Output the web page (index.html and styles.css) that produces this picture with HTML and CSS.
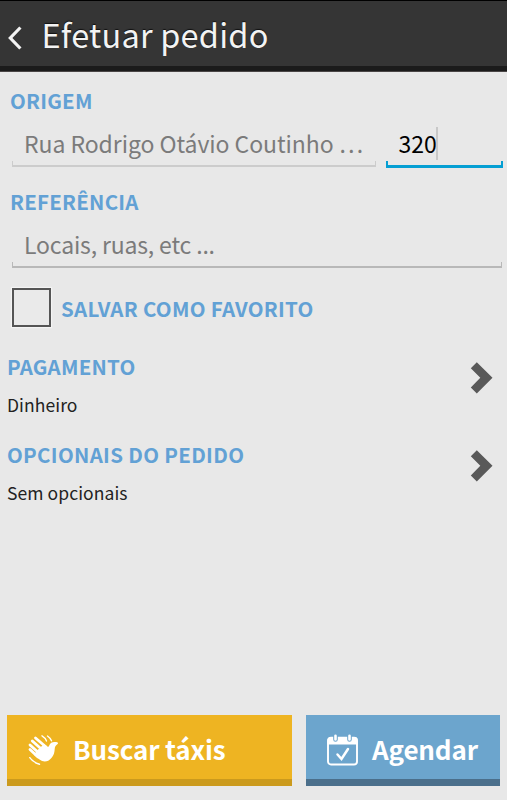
FILE: index.html
```html
<!DOCTYPE html>
<html lang="pt-BR">
<head>
<meta charset="utf-8">
<title>Efetuar pedido</title>
<link rel="stylesheet" href="styles.css">
</head>
<body>
<header class="bar">
  <svg class="back" width="14" height="24" viewBox="0 0 14 24"><path d="M12.4 1.5 2.3 12l10.1 10.500" /></svg>
  <h1 class="title">Efetuar pedido</h1>
</header>
<main class="form">
  <h2 class="label origin"><span>ORIGEM</span></h2>
  <div class="fields">
    <div class="field street"><span>Rua Rodrigo Otávio Coutinho …</span></div>
    <div class="field number"><span>320</span><i class="caret"></i></div>
  </div>
  <h2 class="label reference"><span>REFERÊNCIA</span></h2>
  <div class="field places"><span>Locais, ruas, etc ...</span></div>
  <div class="favorite"><i class="box"></i><span class="label save">SALVAR COMO FAVORITO</span></div>
  <section class="row">
    <div><h2 class="label pay"><span>PAGAMENTO</span></h2><p class="value cash">Dinheiro</p></div>
    <svg width="24" height="32" viewBox="0 0 24 32"><path d="M0.800 6.300 6.800 0.300 22.500 15.700 6.800 31.400 0.800 25.400 10.300 15.700Z"/></svg>
  </section>
  <section class="row">
    <div><h2 class="label options"><span>OPCIONAIS DO PEDIDO</span></h2><p class="value none">Sem opcionais</p></div>
    <svg width="24" height="32" viewBox="0 0 24 32"><path d="M0.800 6.300 6.800 0.300 22.500 15.700 6.800 31.400 0.800 25.400 10.300 15.700Z"/></svg>
  </section>
</main>
<footer class="actions">
  <div class="btn search">
    <svg width="32" height="32" viewBox="0 0 32 32">
      <g fill="none" stroke="#fff" stroke-linecap="round">
        <path stroke-width="2.800" d="M8.500 4 19 13M5.300 7 16 16.500M3 11 13 20M3 15.500 11 23"/>
        <path stroke-width="1.400" d="M15 1.800Q18 3.500 19.500 7M20.500 2Q23.200 3.700 24.500 6.800M2.800 23.700Q6 28.500 12.500 30.200"/>
      </g>
      <path fill="#fff" d="M9.500 17 17 10l4 3c1.500-.8 1.200-2.500 3-3.900 1.700-1.300 6.500-1.500 7-.1.400 1.200-2.600 1.900-3.100 4.600-.5 3 .1 6.500-3.500 10.300C21 28 16.500 28.500 12.500 25.500L7 21z"/>
    </svg>
    <span>Buscar táxis</span>
  </div>
  <div class="btn schedule">
    <svg width="32" height="32" viewBox="0 0 32 32">
      <rect x="2" y="3.700" width="29" height="26.800" rx="3" fill="none" stroke="#fff" stroke-width="1.900"/>
      <path fill="#fff" d="M1.500 9V5.500Q1.500 3 4.500 3h24q3 0 3 2.500V10.500h-30z"/>
      <g fill="none" stroke-linecap="round"><path stroke="#6ca5cd" stroke-width="4.600" d="M9.500 2V5.500M23.500 2V5.500"/><path stroke="#fff" stroke-width="2.600" d="M9.500 1.800V5.500M23.500 1.800V5.500"/><path stroke="#fff" stroke-width="2.500" d="m11.500 20.500 4 4.500 6.500-10"/></g>
    </svg>
    <span>Agendar</span>
  </div>
</footer>
</body>
</html>
```
FILE: styles.css
```css
* { box-sizing: border-box; margin: 0; padding: 0; }
body {
  width: 507px; height: 800px; overflow: hidden;
  display: flex; flex-direction: column;
  background: #e8e8e8;
  font-family: "Noto Sans CJK SC", "Noto Sans", sans-serif;
}
.bar {
  height: 72px; flex: none;
  display: flex; align-items: flex-start;
  padding-left: 8px;
  background: #353535;
  border-top: 1px solid #000;
  border-bottom: 1px solid #4a4646;
  box-shadow: inset 0 -5px #1b1b1b;
}
.back { margin-top: 25px; }
.back path { fill: none; stroke: #f3f3f3; stroke-width: 3.2; }
.title {
  margin: 7px 0 0 19.5px;
  font-size: 32.500px; font-weight: 400; line-height: 52px; letter-spacing: .2px;
  color: #f3f3f3; white-space: nowrap;
  text-shadow: 0 -1px 1px #111;
}
.form { flex: 1; }
.label { font-size: 20.500px; font-weight: 700; line-height: 30px; letter-spacing: .22px; color: #62a1d5; white-space: nowrap; }
.options { letter-spacing: .31px; }
.origin, .reference { padding-left: 10px; }
.origin { margin-top: 13px; }
.fields { display: flex; gap: 10px; padding-left: 12px; margin-top: 13px; }
.field {
  position: relative;
  display: flex; align-items: center;
  height: 39px; padding: 0 0 7px 12px;
  font-size: 23px; line-height: 32px; letter-spacing: -.06px; color: #7b7b7b; white-space: nowrap;
  border-bottom: 2px solid #ccc;
}
.field::before, .field::after {
  content: ""; position: absolute; bottom: 0;
  width: 1px; height: 4px; background: #ccc;
}
.field::before { left: 0; }
.field::after { right: 0; }
.street { width: 364px; }
.number { width: 117px; height: 40px; padding: 0 0 7px 12.5px; color: #000; border-bottom: 3px solid #059fd3; }
.number::before, .number::after { width: 2px; background: #059fd3; }
.caret { width: 2px; height: 33px; margin-left: -1px; background: #c8c8c8; }
.reference { margin-top: 18px; }
.places { width: 490px; margin: 13px 0 0 12px; letter-spacing: -.16px; border-color: #b8b8b8; }
.places::before, .places::after { background: #b8b8b8; }
.favorite { display: flex; align-items: center; height: 40px; margin-top: 20px; padding-left: 12px; gap: 10px; }
.save { letter-spacing: .27px; }
.box { width: 39px; height: 39px; margin-bottom: 1px; border: 2px solid #555; background: #eaeaea; box-shadow: 0 0 1px 1px #f4f4f4; }
.row { display: flex; justify-content: space-between; height: 88px; padding: 0 13px 0 7px; }
.favorite + .row { margin-top: 23px; }
.row svg { margin-top: 10.5px; fill: #595959; }
.value { margin-top: 10px; font-size: 17.500px; line-height: 28px; letter-spacing: .08px; color: #222; }
.actions { display: flex; gap: 14px; padding: 0 7px 14px; }
.btn {
  display: flex; align-items: center;
  height: 71px; padding: 4px 0 0 20px; gap: 14px;
  color: #fff; font-size: 26px; font-weight: 700; line-height: 40px; letter-spacing: -.15px; white-space: nowrap;
}
.btn svg { margin-top: 2px; }
.search { width: 285px; background: #eeb422; border-bottom: 7px solid #cb9a1d; }
.schedule { width: 194px; background: #6ca5cd; border-bottom: 7px solid #4b6f8b; }
```
